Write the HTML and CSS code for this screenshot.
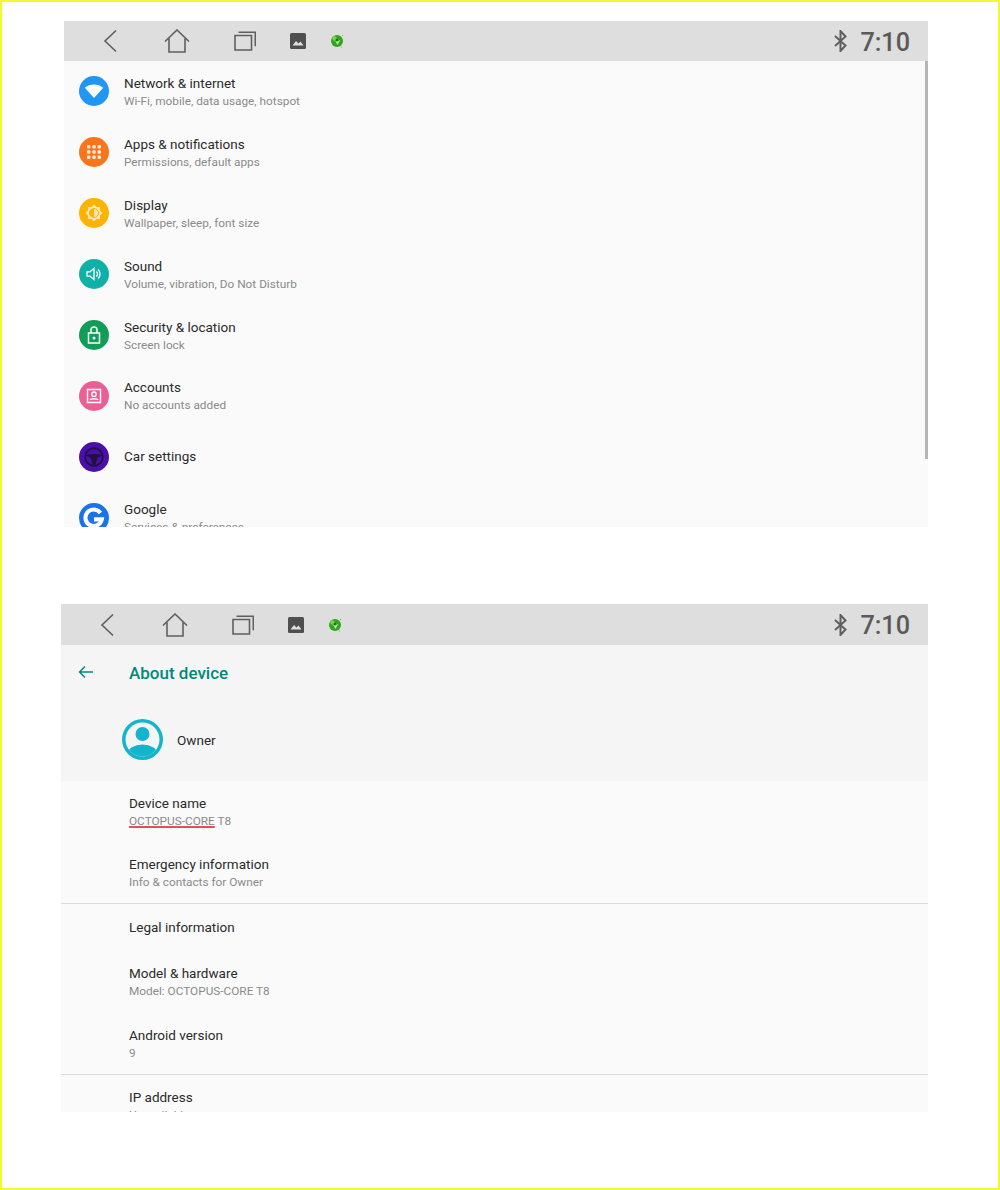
FILE: index.html
```html
<!DOCTYPE html>
<html lang="en">
<head>
    <meta charset="UTF-8">
    <title>Settings</title>
    <link rel="stylesheet" href="styles.css">
</head>
<body>
    <div class="page">
        <!-- settings list -->
        <div class="screen screen-list">
            <div class="nav-bar">
                <svg class="nav-back" width="14" height="24" viewBox="0 0 14 24"><path d="M13 1.500 2 12l11 10.500"/></svg>
                <svg class="nav-home" width="26" height="24" viewBox="0 0 26 24"><path d="M1 12.500 13 1l12 11.500M5 9.500V23h16V9.500"/></svg>
                <svg class="nav-recent" width="22" height="20" viewBox="0 0 22 20"><path d="M1 4.500h16.500V19H1zM4.500 1.200h16.800v14"/></svg>
                <svg class="nav-photo" width="16" height="16" viewBox="0 0 16 16"><rect class="fill" width="16" height="16" rx="1.500"/><path class="cut" d="M2.500 12.500 6 8l2.500 2.500L10.500 8.500l3 4z"/></svg>
                <svg class="nav-globe" width="14" height="14" viewBox="0 0 14 14"><circle cx="7" cy="7" r="6" fill="#2fa51f"/><circle cx="4.500" cy="4.500" r="2.200" fill="#7fd04a"/><path class="glint" d="M5 6.500 7.500 7.500 10.500 5.500 7.500 11z"/><circle cx="6.800" cy="6" r="1.300" fill="#176e1e"/><circle cx="12.500" cy="1.500" r=".6" fill="#5dbb4a"/><circle cx="11.500" cy="13" r=".6" fill="#5dbb4a"/></svg>
                <div class="nav-right">
                    <svg class="nav-bt" width="13" height="22" viewBox="0 0 13 22"><path d="M1 6l10.500 9.500L6.500 21V1l5 5.500L1 16"/></svg>
                    <span class="clock">7:10</span>
                </div>
            </div>
            <div class="list">
                <div class="row">
                    <div class="round blue"><svg width="20" height="20" viewBox="0 0 20 20"><path fill="#fff" d="M10 17 0.800 6.800C3.200 4.700 6.400 3.500 10 3.500s6.800 1.200 9.200 3.300z"/></svg></div>
                    <div class="texts"><div class="title">Network &amp; internet</div><div class="sub">Wi-Fi, mobile, data usage, hotspot</div></div>
                </div>
                <div class="row">
                    <div class="round orange"><svg width="16" height="16" viewBox="0 0 16 16" fill="#fff" opacity=".85"><rect x="1" y="1" width="3.400" height="3.400" rx="1"/><rect x="6.300" y="1" width="3.400" height="3.400" rx="1"/><rect x="11.600" y="1" width="3.400" height="3.400" rx="1"/><rect x="1" y="6.300" width="3.400" height="3.400" rx="1"/><rect x="6.300" y="6.300" width="3.400" height="3.400" rx="1"/><rect x="11.600" y="6.300" width="3.400" height="3.400" rx="1"/><rect x="1" y="11.600" width="3.400" height="3.400" rx="1"/><rect x="6.300" y="11.600" width="3.400" height="3.400" rx="1"/><rect x="11.600" y="11.600" width="3.400" height="3.400" rx="1"/></svg></div>
                    <div class="texts"><div class="title">Apps &amp; notifications</div><div class="sub">Permissions, default apps</div></div>
                </div>
                <div class="row">
                    <div class="round amber"><svg width="20" height="20" viewBox="0 0 20 20"><path fill="#ffe9b0" d="M10 1.500 12.500 3.900H16V7.400L18.500 10 16 12.500V16H12.500L10 18.500 7.500 16H4V12.500L1.500 10 4 7.400V3.900H7.500z"/><path fill="#ffb300" d="M10 5.500a4.500 4.500 0 0 0 0 9z"/><circle cx="10" cy="10" r="4.500" fill="none" stroke="#ffb300" stroke-width="1"/></svg></div>
                    <div class="texts"><div class="title">Display</div><div class="sub">Wallpaper, sleep, font size</div></div>
                </div>
                <div class="row">
                    <div class="round teal"><svg width="18" height="18" viewBox="0 0 18 18"><path fill="none" stroke="#fff" stroke-width="1.300" d="M2 6.800h3L9 3.500v11L5 11.200H2z"/><path fill="none" stroke="#fff" stroke-width="1.300" d="M11.200 6.500a3 3 0 0 1 0 5M13 4.500a6 6 0 0 1 0 9"/></svg></div>
                    <div class="texts"><div class="title">Sound</div><div class="sub">Volume, vibration, Do Not Disturb</div></div>
                </div>
                <div class="row">
                    <div class="round green"><svg width="18" height="20" viewBox="0 0 18 20"><path fill="none" stroke="#fff" stroke-width="1.500" d="M3.500 8h11v10h-11zM6 8V5a3 3 0 0 1 6 0v3"/><circle cx="9" cy="13" r="1.500" fill="#fff"/></svg></div>
                    <div class="texts"><div class="title">Security &amp; location</div><div class="sub">Screen lock</div></div>
                </div>
                <div class="row">
                    <div class="round pink"><svg width="18" height="18" viewBox="0 0 18 18"><path fill="none" stroke="#fff" stroke-width="1.400" d="M2.500 2.500h13v13h-13z"/><circle cx="9" cy="7.200" r="2.200" fill="none" stroke="#fff" stroke-width="1.300"/><path fill="none" stroke="#fff" stroke-width="1.300" d="M5 13c.5-1.700 7.500-1.700 8 0"/></svg></div>
                    <div class="texts"><div class="title">Accounts</div><div class="sub">No accounts added</div></div>
                </div>
                <div class="row">
                    <div class="round indigo"><svg width="22" height="22" viewBox="0 0 20 20"><circle cx="10" cy="10" r="8" fill="none" stroke="#1f1140" stroke-width="1.600"/><path fill="#1f1140" d="M2.500 8.500c4-1.700 11-1.700 15 0L13 11l-1.500 6h-3L7 11z"/></svg></div>
                    <div class="texts"><div class="title">Car settings</div></div>
                </div>
                <div class="row">
                    <div class="round google"><svg width="22" height="22" viewBox="0 0 24 24"><path fill="none" stroke="#fff" stroke-width="4.500" d="M19 6.500A9 9 0 1 0 20.500 13.500H12"/></svg></div>
                    <div class="texts"><div class="title">Google</div><div class="sub">Services &amp; preferences</div></div>
                </div>
            </div>
            <div class="scrollbar"></div>
        </div>

        <!-- about device -->
        <div class="screen screen-about">
            <div class="nav-bar">
                <svg class="nav-back" width="14" height="24" viewBox="0 0 14 24"><path d="M13 1.500 2 12l11 10.500"/></svg>
                <svg class="nav-home" width="26" height="24" viewBox="0 0 26 24"><path d="M1 12.500 13 1l12 11.500M5 9.500V23h16V9.500"/></svg>
                <svg class="nav-recent" width="22" height="20" viewBox="0 0 22 20"><path d="M1 4.500h16.500V19H1zM4.500 1.200h16.800v14"/></svg>
                <svg class="nav-photo" width="16" height="16" viewBox="0 0 16 16"><rect class="fill" width="16" height="16" rx="1.500"/><path class="cut" d="M2.500 12.500 6 8l2.500 2.500L10.500 8.500l3 4z"/></svg>
                <svg class="nav-globe" width="14" height="14" viewBox="0 0 14 14"><circle cx="7" cy="7" r="6" fill="#2fa51f"/><circle cx="4.500" cy="4.500" r="2.200" fill="#7fd04a"/><path class="glint" d="M5 6.500 7.500 7.500 10.500 5.500 7.500 11z"/><circle cx="6.800" cy="6" r="1.300" fill="#176e1e"/><circle cx="12.500" cy="1.500" r=".6" fill="#5dbb4a"/><circle cx="11.500" cy="13" r=".6" fill="#5dbb4a"/></svg>
                <div class="nav-right">
                    <svg class="nav-bt" width="13" height="22" viewBox="0 0 13 22"><path d="M1 6l10.500 9.500L6.500 21V1l5 5.500L1 16"/></svg>
                    <span class="clock">7:10</span>
                </div>
            </div>
            <div class="about-head">
                <div class="about-top">
                    <svg class="about-arrow" width="16" height="14" viewBox="0 0 16 14"><path d="M15 7H1.500M7 1.500 1.500 7 7 12.500"/></svg>
                    <h1>About device</h1>
                </div>
                <div class="owner">
                    <svg width="41" height="41" viewBox="0 0 41 41"><defs><clipPath id="avatar-clip"><circle cx="20.500" cy="20.500" r="17"/></clipPath></defs><circle cx="20.500" cy="20.500" r="20.500" fill="#12b5cb"/><circle cx="20.500" cy="20.500" r="17" fill="#f5f5f5"/><circle cx="20.500" cy="15" r="7" fill="#12b5cb"/><ellipse cx="20.500" cy="35" rx="15" ry="9.500" fill="#12b5cb" clip-path="url(#avatar-clip)"/></svg>
                    <span>Owner</span>
                </div>
            </div>
            <div class="about-list">
                <div class="item item-top"><div class="title">Device name</div><div class="sub"><span class="misspelled">OCTOPUS-CORE</span> T8</div></div>
                <div class="item item-top"><div class="title">Emergency information</div><div class="sub">Info &amp; contacts for Owner</div></div>
                <div class="divider"></div>
                <div class="item item-short"><div class="title">Legal information</div></div>
                <div class="item"><div class="title">Model &amp; hardware</div><div class="sub">Model: OCTOPUS-CORE T8</div></div>
                <div class="item"><div class="title">Android version</div><div class="sub">9</div></div>
                <div class="divider"></div>
                <div class="item"><div class="title">IP address</div><div class="sub">Unavailable</div></div>
            </div>
        </div>
    </div>
</body>
</html>
```

FILE: styles.css
```css
html, body {
    margin: 0;
    padding: 0;
    background-color: white;
}
.page {
    box-sizing: border-box;
    width: 1000px;
    height: 1190px;
    padding-top: 19px;
    border: 2px solid #f2f92e;
    font-family: Roboto, "Liberation Sans", sans-serif;
    color: #2b2b2b;
}
.screen {
    position: relative;
    overflow: hidden;
    background-color: #fafafa;
}
.screen-list {
    width: 864px;
    height: 506px;
    margin-left: 62px;
}
.screen-about {
    width: 867px;
    height: 508px;
    margin-top: 77px;
    margin-left: 59px;
}

/* top bar */
.nav-bar {
    display: flex;
    align-items: center;
    height: 40px;
    padding-left: 39px;
    padding-right: 18px;
    background-color: #dedede;
}
.screen-about .nav-bar {
    height: 41px;
}
.nav-back path,
.nav-home path,
.nav-recent path,
.nav-bt path {
    fill: none;
    stroke: #5f5f5f;
    stroke-width: 1.600;
}
.nav-photo .fill {
    fill: #4f4f4f;
}
.nav-photo .cut {
    fill: #dedede;
}
.nav-globe .glint {
    fill: #b9e6a0;
}
.nav-home {
    margin-left: 47px;
}
.screen-about .nav-home {
    margin-left: 48px;
}
.nav-recent {
    margin-left: 44px;
}
.nav-photo {
    margin-left: 34px;
}
.nav-globe {
    margin-left: 24px;
}
.nav-right {
    display: flex;
    align-items: center;
    gap: 13px;
    margin-left: auto;
}
.nav-bt path {
    stroke-width: 2;
}
.clock {
    margin-top: 2px;
    font-size: 25.200px;
    font-weight: 500;
    color: #5a5a5a;
}

/* shared text */
.title {
    margin-bottom: 1px;
    font-size: 13.5px;
    line-height: 18px;
    color: #2b2b2b;
}
.sub {
    font-size: 11.8px;
    line-height: 16px;
    color: #8a8a8a;
}

/* settings rows */
.row {
    display: flex;
    align-items: center;
    gap: 15px;
    height: 60.9px;
    padding-left: 15px;
}
.round {
    display: flex;
    align-items: center;
    justify-content: center;
    width: 30px;
    height: 30px;
    border-radius: 50%;
    flex-shrink: 0;
}
.blue { background-color: #2196f3; }
.orange { background-color: #f9751c; }
.amber { background-color: #ffb300; }
.teal { background-color: #0fb0a8; }
.green { background-color: #0f9d58; }
.pink { background-color: #ec5f96; }
.indigo { background-color: #4a0fa8; }
.google { background-color: #1a73e8; }
.scrollbar {
    position: absolute;
    top: 40px;
    right: 0;
    width: 3px;
    height: 398px;
    background-color: #b5b5b5;
}

/* about device */
.about-head {
    height: 136px;
    background-color: #f5f5f5;
}
.about-top {
    display: flex;
    align-items: center;
    height: 56px;
    padding-left: 17px;
}
.about-top h1 {
    margin: 0 0 0 35px;
    font-size: 17px;
    font-weight: 500;
    color: #00897b;
}
.about-arrow {
    margin-bottom: 2px;
}
.about-arrow path {
    fill: none;
    stroke: #00897b;
    stroke-width: 1.500;
}
.owner {
    display: flex;
    align-items: center;
    gap: 14px;
    height: 41px;
    margin-top: 18px;
    padding-left: 61px;
    font-size: 13.5px;
}
.item {
    display: flex;
    flex-direction: column;
    justify-content: center;
    height: 61.5px;
    padding-left: 68px;
}
.item-top {
    height: 61px;
}
.item-short {
    height: 47px;
}
.misspelled {
    text-decoration: underline;
    text-decoration-color: #e0505a;
    text-decoration-thickness: 2px;
    text-underline-offset: 1px;
}
.divider {
    height: 1px;
    background-color: #dcdcdc;
}
```
